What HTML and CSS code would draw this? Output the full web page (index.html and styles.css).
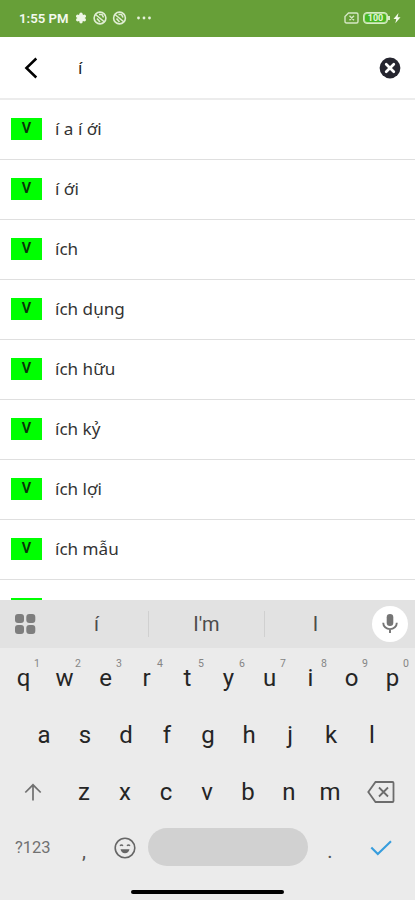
FILE: index.html
```html
<!DOCTYPE html>
<html lang="vi">
<head>
<meta charset="utf-8">
<title>Từ điển</title>
<link rel="stylesheet" href="styles.css">
</head>
<body>
<div class="screen">
  <header class="status">
    <span class="clock">1:55 PM</span>
    <svg class="status-icons" width="80" height="16" viewBox="0 0 80 16">
      <g fill="#eef6e6"><circle cx="8" cy="8" r="3.6"/><circle cx="8" cy="4.3" r="1.7"/><circle cx="8" cy="11.7" r="1.7"/><circle cx="4.7" cy="6.2" r="1.7"/><circle cx="11.3" cy="6.2" r="1.7"/><circle cx="4.7" cy="9.8" r="1.7"/><circle cx="11.3" cy="9.8" r="1.7"/></g>
      <g fill="none" stroke="#dfedd2" stroke-width="1.6"><circle cx="27" cy="8" r="5.9"/><path d="M22.500 4.500l9 7.500M24 8.500l3 3.500M26 4.500h3l1.500 3"/><circle cx="46.500" cy="8" r="5.900"/><path d="M42 4.500l9 7.500M43.500 8.500l3 3.500M45.500 4.500h3l1.500 3"/></g>
      <g fill="#e6f1dc"><circle cx="65.500" cy="8" r="1.400"/><circle cx="71" cy="8" r="1.400"/><circle cx="76.500" cy="8" r="1.400"/></g>
    </svg>
    <span class="spacer"></span>
    <svg width="15" height="12" viewBox="0 0 15 12" fill="none" stroke="#d5e7c4" stroke-width="1.400"><path d="M4.500 1H12.500Q14 1 14 2.500V9.500Q14 11 12.500 11H2.500Q1 11 1 9.500V4.500ZM5.500 3.800l4.500 4.500M10 3.800l-4.500 4.500"/></svg>
    <span class="battery"><span class="battery-level">100</span></span>
    <span class="battery-tip"></span>
    <svg class="bolt" width="8" height="12" viewBox="0 0 8 12" fill="#f4faee"><path d="M5.500 1L.5 7H3.300L2.300 11.200L7.500 5.200H4.600Z"/></svg>
  </header>

  <div class="search">
    <svg class="back" width="14" height="22" viewBox="0 0 14 22" fill="none" stroke="#000" stroke-width="2.500"><path d="M12.300 1.500L2.400 11L12.300 20.500"/></svg>
    <span class="query">í</span>
    <svg class="clear" width="22" height="22" viewBox="0 0 22 22"><circle cx="11" cy="11" r="10.400" fill="#25252f"/><path d="M7.200 7.200l7.600 7.600M14.800 7.200l-7.600 7.600" stroke="#fff" stroke-width="2.700" stroke-linecap="round"/></svg>
  </div>

  <main class="results">
    <div class="row"><span class="tag">V</span><span class="word">í a í ới</span></div>
    <div class="row"><span class="tag">V</span><span class="word">í ới</span></div>
    <div class="row"><span class="tag">V</span><span class="word">ích</span></div>
    <div class="row"><span class="tag">V</span><span class="word">ích dụng</span></div>
    <div class="row"><span class="tag">V</span><span class="word">ích hữu</span></div>
    <div class="row"><span class="tag">V</span><span class="word">ích kỷ</span></div>
    <div class="row"><span class="tag">V</span><span class="word">ích lợi</span></div>
    <div class="row"><span class="tag">V</span><span class="word">ích mẫu</span></div>
    <div class="row"><span class="tag"></span></div>
  </main>

  <section class="keyboard">
    <div class="suggest">
      <svg class="apps" width="22" height="22" viewBox="0 0 22 22" fill="#7e7e7e"><rect x="1" y="1" width="9" height="9" rx="3"/><rect x="12.300" y="1" width="9" height="9" rx="3"/><rect x="1" y="12" width="9" height="9" rx="3"/><rect x="12.300" y="12" width="9" height="9" rx="3"/></svg>
      <span class="hint first">í</span>
      <span class="hint">I'm</span>
      <span class="hint last">I</span>
      <span class="mic"><svg width="18" height="22" viewBox="0 0 18 22"><rect x="5.700" y="1" width="6.600" height="12" rx="3.300" fill="#757575"/><path d="M2.200 9.800a6.800 6.300 0 0 0 13.600 0M9 16V20" fill="none" stroke="#757575" stroke-width="1.900"/></svg></span>
    </div>
    <div class="keys top">
      <span class="key">q<sup>1</sup></span><span class="key">w<sup>2</sup></span><span class="key">e<sup>3</sup></span><span class="key">r<sup>4</sup></span><span class="key">t<sup>5</sup></span><span class="key">y<sup>6</sup></span><span class="key">u<sup>7</sup></span><span class="key">i<sup>8</sup></span><span class="key">o<sup>9</sup></span><span class="key">p<sup>0</sup></span>
    </div>
    <div class="keys">
      <span class="key">a</span><span class="key">s</span><span class="key">d</span><span class="key">f</span><span class="key">g</span><span class="key">h</span><span class="key">j</span><span class="key">k</span><span class="key">l</span>
    </div>
    <div class="keys third">
      <span class="key wide"><svg width="18" height="18" viewBox="0 0 18 18" fill="none" stroke="#707070" stroke-width="1.700"><path d="M9 17.500V2M1.300 9.500L9 1.800L16.700 9.500"/></svg></span><span class="key">z</span><span class="key">x</span><span class="key">c</span><span class="key">v</span><span class="key">b</span><span class="key">n</span><span class="key">m</span><span class="key wide"><svg width="28" height="24" viewBox="0 0 28 24" fill="none" stroke="#6c6c6c" stroke-width="1.800"><path d="M8.500 2H25.500Q26.500 2 26.500 3V21Q26.500 22 25.500 22H8.500L1.300 12ZM12 7.500l9 9M21 7.500l-9 9"/></svg></span>
    </div>
    <div class="keys bottom">
      <span class="key wide symbols">?123</span><span class="key mark">,</span><span class="key"><svg width="22" height="22" viewBox="0 0 22 22"><circle cx="11" cy="11" r="9.800" fill="none" stroke="#666" stroke-width="1.600"/><path d="M6 8.800q1.500-1.500 3 0M13 8.800q1.500-1.500 3 0" fill="none" stroke="#666" stroke-width="1.500"/><path d="M6.500 12.300h9q-1 4-4.500 4t-4.500-4Z" fill="#666"/></svg></span><span class="space"></span><span class="key mark">.</span><span class="key wide"><svg width="22" height="16" viewBox="0 0 22 16" fill="none" stroke="#379ddd" stroke-width="2.100"><path d="M1.300 7.500L7.800 14L21 1.200"/></svg></span>
    </div>
    <div class="home"></div>
  </section>
</div>
</body>
</html>
```
FILE: styles.css
```css
* { box-sizing: border-box; }

body {
  margin: 0;
  background: #fff;
  font-family: Roboto, "Liberation Sans", sans-serif;
}

svg { display: block; flex: none; }

.screen {
  display: flex;
  flex-direction: column;
  width: 415px;
  height: 900px;
  overflow: hidden;
}

.status {
  display: flex;
  align-items: center;
  flex: none;
  height: 37px;
  padding: 0 14px 1px 19px;
  background: #679f38;
  color: #f4f9ef;
}

.clock { width: 54px; font-size: 13.2px; font-weight: 600; white-space: nowrap; }
.spacer { flex: 1; }

.battery {
  width: 25px;
  height: 12px;
  margin-left: 4px;
  padding: 1px;
  border: 1px solid #d6ebc5;
  border-radius: 4px;
  background: #b5dd99;
}

.battery-level {
  display: block;
  height: 8px;
  border-radius: 2px;
  background: #48b524;
  color: #e4f5d8;
  font-size: 9px;
  font-weight: 700;
  line-height: 8px;
  text-align: center;
}

.battery-tip { width: 2px; height: 4px; background: #d6ebc5; }

.bolt { margin-left: 3px; }

.search {
  display: flex;
  align-items: center;
  flex: none;
  height: 63px;
  padding: 1px 14px 0 24px;
  border-bottom: 2px solid #ececec;
}

.query {
  flex: 1;
  margin-left: 40px;
  padding-bottom: 2px;
  color: #222;
  font-family: "Noto Sans", sans-serif;
  font-size: 17px;
}

.results { flex: none; height: 500px; overflow: hidden; }

.row {
  display: flex;
  align-items: center;
  height: 60px;
  padding: 0 11px 1px;
  border-bottom: 1px solid #dfdfdf;
}

.tag {
  width: 31px;
  height: 22px;
  background: #00ff01;
  color: #083508;
  font-size: 14.5px;
  font-weight: 600;
  line-height: 22px;
  text-align: center;
}

.word {
  margin-left: 13px;
  color: #333;
  font-family: "Noto Sans", sans-serif;
  font-size: 17.1px;
  line-height: 24px;
}

.keyboard {
  display: flex;
  flex-direction: column;
  height: 300px;
  background: #ebebeb;
  color: #252525;
}

.suggest {
  display: flex;
  align-items: center;
  flex: none;
  height: 48px;
  padding: 0 6px 0 14px;
  background: #e2e2e2;
}

.hint {
  width: 116px;
  height: 26px;
  border-left: 1px solid #d0d0d0;
  color: #4c4c4c;
  font-size: 20px;
  line-height: 27px;
  text-align: center;
}

.first { width: 105px; margin-left: 7px; padding-left: 2px; border-left: 0; }
.last { width: 102px; }

.mic {
  display: flex;
  align-items: center;
  justify-content: center;
  width: 36px;
  height: 36px;
  margin: 0 0 1px 6px;
  border-radius: 50%;
  background: #fff;
}

.keys {
  display: flex;
  justify-content: center;
  flex: none;
  height: 57px;
  padding-left: 1px;
}

.top { padding-top: 1px; }
.top + .keys { height: 58px; padding-top: 1px; }
.third, .bottom { padding: 0 1px 0 0; }

.key {
  position: relative;
  display: flex;
  align-items: center;
  justify-content: center;
  width: 41px;
  height: 57px;
  font-size: 24px;
}

.key sup {
  position: absolute;
  top: 8px;
  right: 4px;
  color: #858585;
  font-size: 10.5px;
  line-height: 14px;
}

.wide { width: 61.5px; }
.bottom .key { height: 55px; }
.symbols { color: #717171; font-size: 16.5px; }
.bottom .mark { padding-top: 6px; color: #555; font-size: 20px; }

.space {
  width: 160px;
  height: 38px;
  margin: 8px 2px 0;
  border-radius: 19px;
  background: #d1d1d1;
}

.home {
  width: 153px;
  height: 4px;
  margin: 13px auto 0;
  border-radius: 2px;
  background: #000;
}
```
